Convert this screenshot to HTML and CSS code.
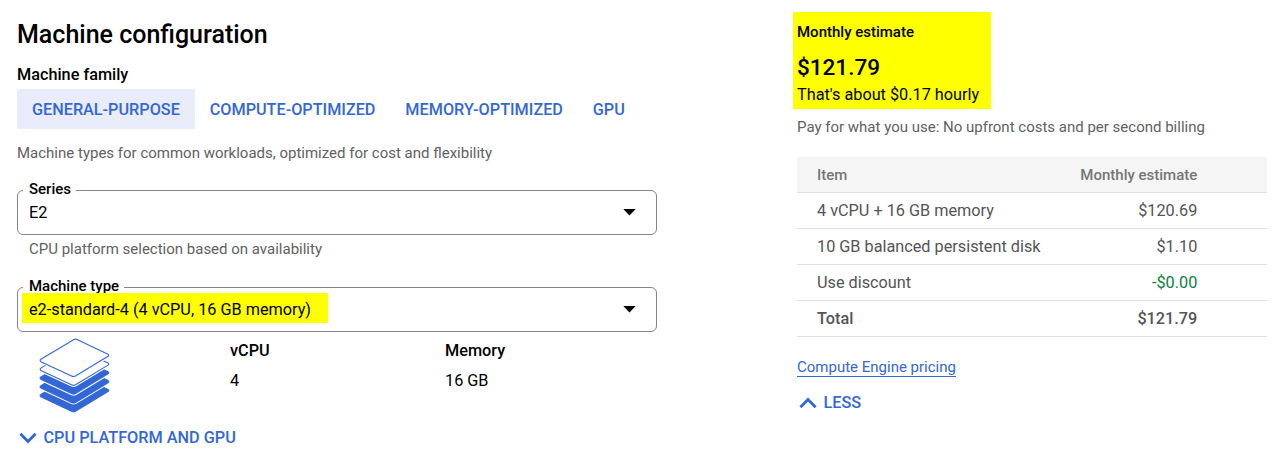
FILE: index.html
```html
<!DOCTYPE html>
<html lang="en">
<head>
<meta charset="utf-8">
<title>Machine configuration</title>
<link rel="stylesheet" href="styles.css">
</head>
<body>
<main class="page">
  <section class="config">
    <h1 class="title">Machine configuration</h1>
    <h2 class="family-label">Machine family</h2>
    <nav class="tabs">
      <a class="tab tab-active">GENERAL-PURPOSE</a>
      <a class="tab">COMPUTE-OPTIMIZED</a>
      <a class="tab">MEMORY-OPTIMIZED</a>
      <a class="tab">GPU</a>
    </nav>
    <p class="description">Machine types for common workloads, optimized for cost and flexibility</p>

    <fieldset class="field">
      <legend class="field-label">Series</legend>
      <div class="field-row">
        <span class="field-value">E2</span>
        <svg class="caret" width="13" height="7" viewBox="0 0 13 7"><path d="M.3 0h12.4L6.5 6.5z"/></svg>
      </div>
    </fieldset>
    <p class="helper">CPU platform selection based on availability</p>

    <fieldset class="field">
      <legend class="field-label">Machine type</legend>
      <div class="field-row">
        <span class="field-value marked">e2-standard-4 (4 vCPU, 16 GB memory)</span>
        <svg class="caret" width="13" height="7" viewBox="0 0 13 7"><path d="M.3 0h12.4L6.5 6.5z"/></svg>
      </div>
    </fieldset>

    <div class="specs">
      <svg class="stack" width="71" height="75" viewBox="0 0 71 75">
        <defs>
          <path id="layer" d="M35 1.5Q36.5.8 38 1.5L69 16.2Q70.6 17.2 69 18.3L36.5 38Q34.5 39 32.5 38L1.9 23.7Q.3 22.5 1.9 21.3Z"/>
        </defs>
        <g class="layer-solid"><use href="#layer" y="35.2"/></g>
        <g class="layer-gap"><use href="#layer" y="26.4"/></g>
        <g class="layer-solid"><use href="#layer" y="26.4"/></g>
        <g class="layer-gap"><use href="#layer" y="17.6"/></g>
        <g class="layer-solid"><use href="#layer" y="17.6"/></g>
        <g class="layer-gap"><use href="#layer" y="8.8"/></g>
        <g class="layer-open"><use href="#layer" y="8.8"/></g>
        <g class="layer-gap"><use href="#layer"/></g>
        <g class="layer-open"><use href="#layer"/></g>
      </svg>
      <dl class="spec"><dt>vCPU</dt><dd>4</dd></dl>
      <dl class="spec"><dt>Memory</dt><dd>16 GB</dd></dl>
    </div>

    <a class="toggle toggle-platform">
      <svg class="chevron" width="18" height="12" viewBox="0 0 18 12"><path d="M1.4 1.7 9 9.5l7.6-7.8"/></svg>
      <span>CPU PLATFORM AND GPU</span>
    </a>
  </section>

  <aside class="estimate">
    <div class="summary">
      <h2 class="summary-label">Monthly estimate</h2>
      <p class="price">$121.79</p>
      <p class="hourly">That's about $0.17 hourly</p>
    </div>
    <p class="billing">Pay for what you use: No upfront costs and per second billing</p>
    <table class="costs">
      <thead><tr><th>Item</th><th>Monthly estimate</th></tr></thead>
      <tbody>
        <tr><td>4 vCPU + 16 GB memory</td><td>$120.69</td></tr>
        <tr><td>10 GB balanced persistent disk</td><td>$1.10</td></tr>
        <tr><td>Use discount</td><td class="discount">-$0.00</td></tr>
        <tr class="total"><td>Total</td><td>$121.79</td></tr>
      </tbody>
    </table>
    <div class="pricing"><a class="pricing-link">Compute Engine pricing</a></div>
    <a class="toggle toggle-less">
      <svg class="chevron" width="18" height="12" viewBox="0 0 18 12"><path d="M1.4 10.3 9 2.5l7.6 7.8"/></svg>
      <span>LESS</span>
    </a>
  </aside>
</main>
</body>
</html>
```
FILE: styles.css
```css
* { box-sizing: border-box; }

body {
  margin: 0;
  background: #fff;
  color: #000;
  font-family: Roboto, "Liberation Sans", sans-serif;
  font-size: 16.25px;
  line-height: 20px;
}

h1, h2, p, dl, dd { margin: 0; }

.page {
  display: grid;
  grid-template-columns: 640px 470px;
  column-gap: 140px;
  align-items: start;
  height: 455px;
  padding-left: 17px;
  overflow: hidden;
}

.config { padding-top: 20px; }

.title { font-size: 25px; font-weight: 500; line-height: 30px; }
.family-label { margin-top: 15px; font-size: 16.25px; font-weight: 500; }

.tabs { display: flex; margin-top: 4px; }
.tab {
  height: 40px;
  padding: 0 14.9px 0 15px;
  color: #3367d6;
  font-size: 16.23px;
  font-weight: 500;
  line-height: 42px;
}
.tab-active { background: #e9edfb; border-radius: 2px 0 0 2px; }

.description { margin-top: 14px; color: #616161; font-size: 15px; }

.field {
  min-width: 0;
  height: 55px;
  margin: 17px 0 0;
  padding: 0;
  border: 1px solid #80868b;
  border-radius: 6px;
}
.field-label {
  margin-left: 5px;
  padding: 0 5px 2px 6px;
  font-size: 15px;
  font-weight: 500;
  line-height: 19px;
}
.field-row {
  display: flex;
  align-items: center;
  justify-content: space-between;
  height: 20px;
  padding: 0 20px 0 4px;
}
.field-value { height: 30px; padding: 0 17px 0 7px; line-height: 33px; }
.marked { background: #ff0; }
.caret { margin-top: 2px; fill: #000; }

.helper { margin-top: 4px; padding-left: 12px; color: #616161; font-size: 15px; }
.helper + .field { margin-top: 18px; }

.specs {
  display: grid;
  grid-template-columns: 191px 215px 1fr;
  margin-top: 6px;
  padding-left: 22px;
}
.stack { display: block; }
.layer-solid { fill: #3367d6; stroke: #3367d6; stroke-width: 1.1; }
.layer-gap { fill: #fff; stroke: #fff; stroke-width: 3.2; }
.layer-open { fill: #fff; stroke: #3367d6; stroke-width: 1.1; }
.spec { padding-top: 3px; }
.spec dt { font-weight: 500; }
.spec dd { margin-top: 10px; }

.toggle {
  display: flex;
  align-items: center;
  gap: 6.5px;
  color: #3367d6;
  font-weight: 500;
}
.toggle-platform { margin-top: 15px; padding-left: 2px; }
.chevron { fill: none; stroke: #3367d6; stroke-width: 2.8; }

.estimate { padding-top: 12px; }
.summary {
  width: 198px;
  height: 97px;
  margin-left: -4px;
  padding: 10px 0 0 4px;
  background: #ff0;
}
.summary-label { font-size: 15px; font-weight: 500; }
.price { margin-top: 10px; font-size: 22.5px; font-weight: 500; line-height: 30px; }
.hourly { margin-top: 3px; }
.billing { margin-top: 8px; color: #616161; font-size: 15px; }

.costs {
  width: 470px;
  margin-top: 20px;
  border-collapse: separate;
  border-spacing: 0;
  color: #545454;
  white-space: nowrap;
}
.costs th, .costs td {
  height: 36px;
  padding: 0 0 0 20px;
  border-bottom: 1px solid #e0e0e0;
  text-align: left;
}
.costs th { background: #f5f5f5; color: #757575; font-size: 15px; font-weight: 500; }
.costs th:last-child, .costs td:last-child { padding-right: 69.7px; text-align: right; }
.costs .discount { color: #0b8043; }
.costs .total { font-weight: 500; }

.pricing { margin-top: 20px; color: #3367d6; font-size: 15px; }
.pricing-link { border-bottom: 1px solid #3367d6; }
.toggle-less { margin-top: 16px; padding-left: 2px; }
```
